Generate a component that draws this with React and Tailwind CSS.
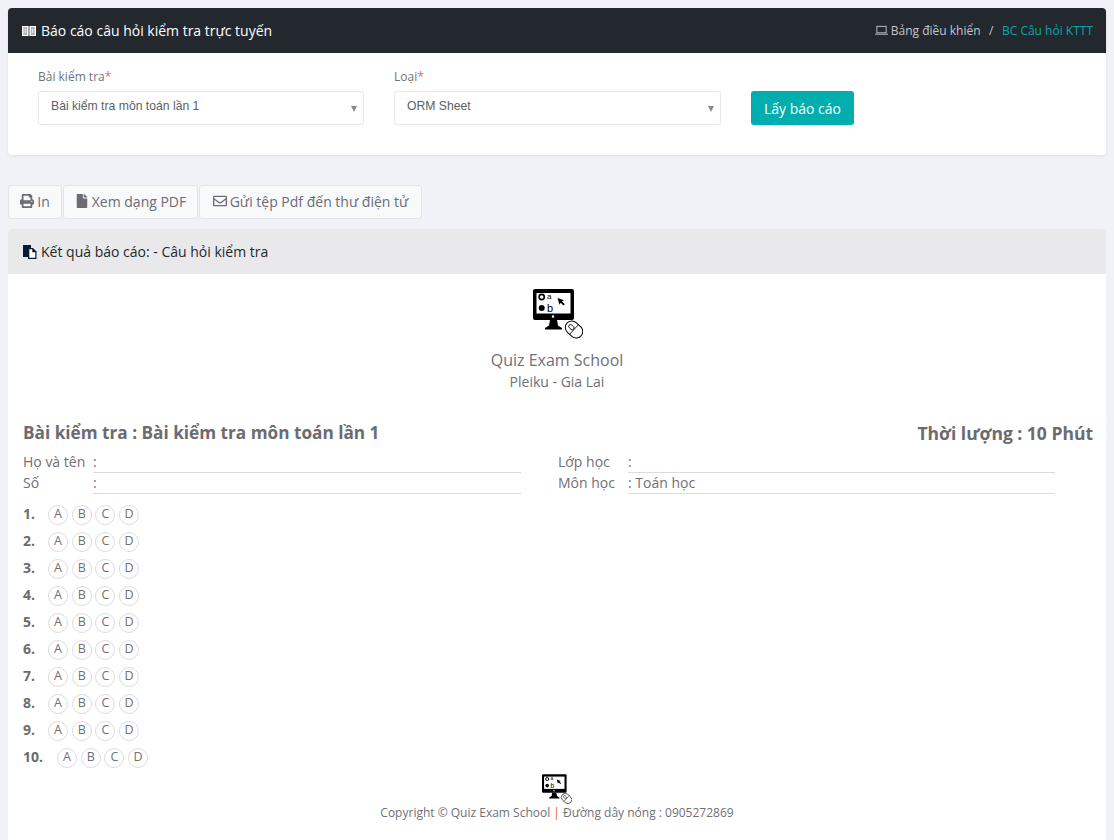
import React from 'react';
import { FaPrint, FaFile, FaRegEnvelope } from 'react-icons/fa';

const questions = [1, 2, 3, 4, 5, 6, 7, 8, 9, 10];
const options = ['A', 'B', 'C', 'D'];

// Monitor + mouse logo, used large in the report head and small in the footer
const Logo = ({ className }) => (
  <svg viewBox="0 0 50 51" className={className}>
    <rect x="0" y="0" width="41" height="31" rx="2" fill="#000" />
    <rect x="3.5" y="4" width="34" height="20.5" fill="#fff" />
    <circle cx="8.7" cy="8" r="2.6" fill="none" stroke="#000" strokeWidth="1.6" />
    <circle cx="8.7" cy="19" r="3" fill="#000" />
    <text x="14" y="10" fontSize="8" fontFamily="Liberation Sans, sans-serif" fill="#000">a</text>
    <text x="14" y="23" fontSize="11" fontFamily="Liberation Sans, sans-serif" fill="#000">b</text>
    <path d="M24.5 9l6.5 2.2-2 1.2 2.8 2.8-1.3 1.3-2.8-2.8-1.2 2z" fill="#000" />
    <circle cx="20" cy="27.5" r="1.2" fill="#fff" />
    <path d="M17 31h7l1 5.5 4 2.5v1.5H12V39l4-2.5z" fill="#000" />
    <g transform="rotate(-48 41 40.5)">
      <rect x="34.5" y="31" width="13" height="19" rx="6.5" fill="#fff" stroke="#000" strokeWidth="1" />
      <rect x="39.2" y="34" width="3.6" height="6" rx="1.8" fill="none" stroke="#000" strokeWidth="0.9" />
      <path d="M34.5 40.5h13" stroke="#000" strokeWidth="0.8" />
    </g>
  </svg>
);

const BookIcon = () => (
  <svg viewBox="0 0 14 10" className="w-[14px] h-[10px] mr-[5px] shrink-0">
    <path d="M0 0h6.6v10H0zM7.4 0H14v10H7.4z" fill="#fff" />
    <path d="M1.3 2h3.8M1.3 4h1.5M3.6 4h1.5M1.3 6h1.5M3.6 6h1.5M1.3 8h3.8M8.9 2h3.8M8.9 4h1.5M11.2 4h1.5M8.9 6h1.5M11.2 6h1.5M8.9 8h3.8" stroke="#23282e" strokeWidth="0.7" />
  </svg>
);

const LaptopIcon = () => (
  <svg viewBox="0 0 14 11" className="w-[13px] h-[11px] mr-[3px] shrink-0" fill="none" stroke="#c4c6c8" strokeWidth="1">
    <rect x="2" y="1" width="10" height="7" />
    <path d="M0 9.5h14" />
  </svg>
);

const FilesIcon = () => (
  <svg viewBox="0 0 14 14" className="w-[14px] h-[14px] mr-[4px] shrink-0">
    <path d="M0 0h8v3H5v9H0z" fill="#0b1a33" />
    <path d="M5 3h5l3.5 3.5V14H5z" fill="#0b1a33" />
    <path d="M6.3 4.3h3v3h3v5.4H6.3z" fill="#fff" />
  </svg>
);

const SelectBox = ({ label, value, className }) => (
  <div className={className}>
    <label className="block text-[12px] leading-[20px] text-[#6f7378] pt-[1px] mb-[4px]">
      {label}<span className="text-[#f0635f]">*</span>
    </label>
    <div className="relative h-[34px] bg-white border border-[#e6e7e9] rounded-[3px] pl-[12px] flex items-center font-['Liberation_Sans',sans-serif] text-[12.2px] text-[#5a5f66] pb-[3px]">
      {value}
      <span className="absolute right-[6px] top-[14px] w-0 h-0 border-x-[3.5px] border-x-transparent border-t-[6px] border-t-[#8a8a8a]" />
    </div>
  </div>
);

const ToolButton = ({ icon, className, children }) => (
  <button className={`h-[34px] flex items-center justify-center gap-[3px] pb-[2px] bg-[#f8f9fb] border border-[#e3e4e8] rounded-[3px] text-[14px] text-[#6c6c72] ${className}`}>
    {icon}
    {children}
  </button>
);

const InfoField = ({ label, value }) => (
  <div className="flex h-[21px] items-start">
    <span className="w-[70px] text-[14px] leading-[19px] text-[#707075]">{label}</span>
    <span className="flex-1 h-[21px] border-b border-[#dcdcdc] text-[14px] leading-[20px] text-[#707075]">: {value}</span>
  </div>
);

const QuestionRow = ({ number }) => (
  <div className="flex items-center h-[27px]">
    <span className={`font-bold text-[14px] leading-[18px] pb-[2px] text-[#6b6b70] ${number === 10 ? 'w-[34px]' : 'w-[25px]'}`}>{number}.</span>
    <div className="flex gap-[3.7px]">
      {options.map((opt) => (
        <span key={opt} className="w-[20px] h-[20px] rounded-full border border-[#dcdcdc] flex items-center justify-center text-[12.5px] text-[#707075]">
          {opt}
        </span>
      ))}
    </div>
  </div>
);

export default function App() {
  return (
    <div className="h-[840px] overflow-hidden bg-[#f0f2f7] px-[8px] pt-[8px] flex flex-col font-['Open_Sans',sans-serif]">
      {/* Filter card */}
      <div className="bg-white rounded-[4px] shadow-[0_1px_3px_rgba(0,0,0,0.08)] h-[147px] shrink-0">
        <div className="h-[45px] bg-[#23282e] rounded-t-[4px] pl-[14px] pr-[13px] flex items-center justify-between">
          <div className="flex items-center text-[14px] text-white">
            <BookIcon />
            Báo cáo câu hỏi kiểm tra trực tuyến
          </div>
          <div className="flex items-center text-[12px] text-[#c4c6c8]">
            <LaptopIcon />
            Bảng điều khiển
            <span className="mx-[8.5px]">/</span>
            <span className="text-[#0ba5a5]">BC Câu hỏi KTTT</span>
          </div>
        </div>
        <div className="flex items-start pl-[30px] pt-[13px]">
          <SelectBox label="Bài kiểm tra" value="Bài kiểm tra môn toán lần 1" className="w-[326px]" />
          <SelectBox label="Loại" value="ORM Sheet" className="w-[327px] ml-[30px]" />
          <button className="ml-[30px] mt-[25px] w-[103px] h-[34px] bg-[#00aeae] rounded-[3px] text-white text-[14px]">
            Lấy báo cáo
          </button>
        </div>
      </div>

      {/* Toolbar */}
      <div className="flex gap-[1px] mt-[30px] shrink-0">
        <ToolButton className="w-[54px]" icon={<FaPrint className="text-[14px]" />}>In</ToolButton>
        <ToolButton className="w-[135px]" icon={<FaFile className="text-[14px]" />}>Xem dạng PDF</ToolButton>
        <ToolButton className="w-[223px]" icon={<FaRegEnvelope className="text-[14px]" />}>Gửi tệp Pdf đến thư điện tử</ToolButton>
      </div>

      {/* Report */}
      <div className="mt-[10px] flex-1 bg-white rounded-t-[4px]">
        <div className="h-[45px] bg-[#e9e9eb] rounded-t-[4px] px-[15px] flex items-center text-[14px] text-[#23282e]">
          <FilesIcon />
          Kết quả báo cáo: - Câu hỏi kiểm tra
        </div>
        <div className="pl-[15px] pr-[13px] pt-[15px]">
          <div className="flex flex-col items-center pr-[2px]">
            <Logo className="w-[50px] h-[51px] ml-[2px]" />
            <div className="mt-[9px] text-[16px] leading-[22px] text-[#707075]">Quiz Exam School</div>
            <div className="text-[14px] leading-[22px] text-[#707075]">Pleiku - Gia Lai</div>
          </div>

          <div className="mt-[28px] flex justify-between font-bold leading-[24px] text-[#6b6b70]">
            <span className="text-[17.2px]">Bài kiểm tra : Bài kiểm tra môn toán lần 1</span>
            <span className="text-[17.5px]">Thời lượng : 10 Phút</span>
          </div>

          <div className="mt-[7px] grid grid-cols-[498px_497px] gap-x-[37px]">
            <div>
              <InfoField label="Họ và tên" value="" />
              <InfoField label="Số" value="" />
            </div>
            <div>
              <InfoField label="Lớp học" value="" />
              <InfoField label="Môn học" value="Toán học" />
            </div>
          </div>

          <div className="mt-[7px]">
            {questions.map((n) => (
              <QuestionRow key={n} number={n} />
            ))}
          </div>

          <div className="flex flex-col items-center mt-[3px] pr-[2px]">
            <Logo className="w-[30px] h-[31px]" />
            <div className="mt-[-1px] text-[12px] leading-[18px] text-[#707075]">
              Copyright © Quiz Exam School <span className="text-[#e0603c]">|</span> Đường dây nóng : 0905272869
            </div>
          </div>
        </div>
      </div>
    </div>
  );
}
